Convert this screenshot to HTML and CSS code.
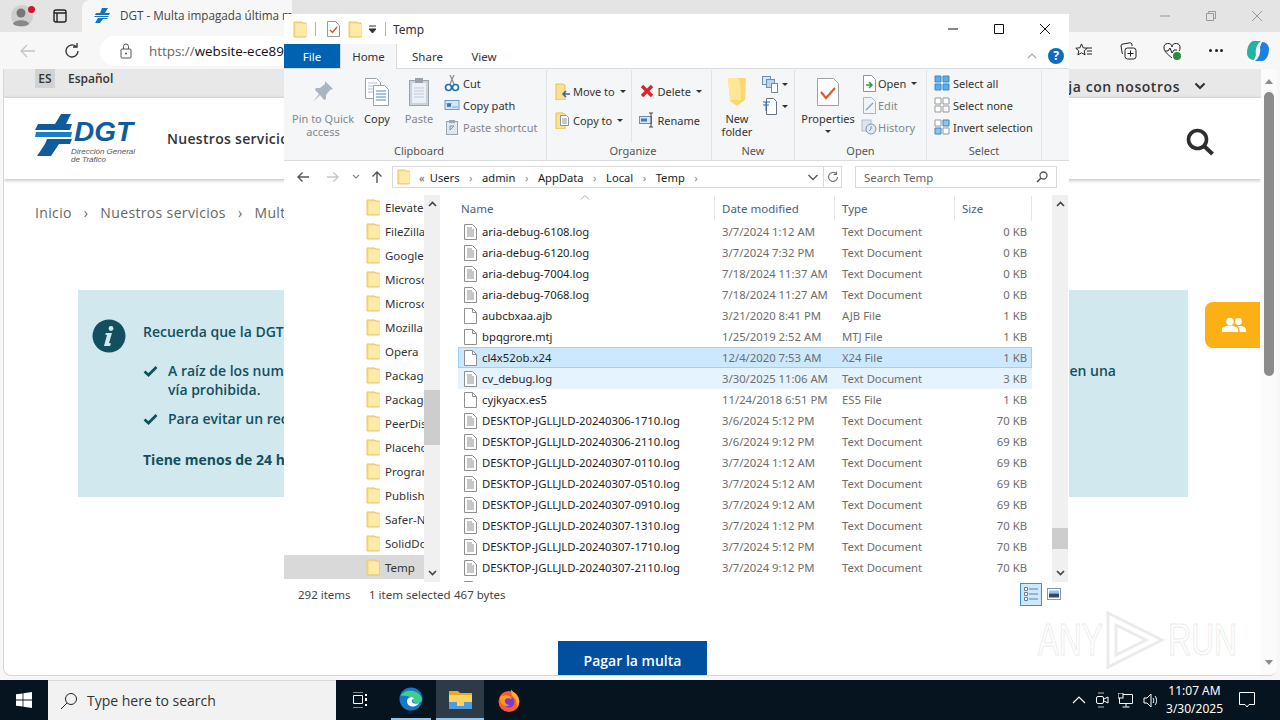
FILE: index.html
```html
<!DOCTYPE html>
<html lang="es">
<head>
    <meta charset="UTF-8">
    <title>DGT - Multa impagada</title>
    <link rel="stylesheet" href="styles.css">
</head>
<body>
    <svg class="defs" width="0" height="0">
        <symbol id="folder" viewBox="0 0 14 17">
            <path d="M1 1h8l1 1h3v14H1z" fill="#fde18e" stroke="#e8c46a" stroke-width="1"/>
            <path d="M3 3h10v12H3z" fill="#ffeaa8"/>
        </symbol>
        <symbol id="textdoc" viewBox="0 0 13 16">
            <path d="M.5.5h8l4 4v11H.5z" fill="#fff" stroke="#8f8f8f"/>
            <path d="M3 4h5M3 6h7M3 8h7M3 10h7M3 12h7" stroke="#8f8f8f"/>
        </symbol>
        <symbol id="blankdoc" viewBox="0 0 13 16">
            <path d="M.5.5h8l4 4v11H.5z" fill="#fff" stroke="#8f8f8f"/>
            <path d="M8.5.5v4h4" fill="none" stroke="#8f8f8f"/>
        </symbol>
        <symbol id="grid" viewBox="0 0 16 16">
            <path d="M1 1h6v6H1zM9 1h6v6H9zM1 9h6v6H1zM9 9h6v6H9z"/>
        </symbol>
    </svg>

    <div class="browser">
        <div class="tabbar">
            <div class="profile">
                <svg width="24" height="24" viewBox="0 0 24 24"><circle cx="12" cy="12" r="11" fill="#cfcfcf"/><circle cx="11" cy="9" r="4.5" fill="#777"/><path d="M3 20c1-5 15-5 16 0-3 3-13 3-16 0z" fill="#888"/></svg>
                <span class="profile-dot"></span>
            </div>
            <svg class="tab-actions" width="16" height="16" viewBox="0 0 16 16"><rect x="2" y="2" width="12" height="12" rx="2" fill="none" stroke="#222" stroke-width="1.4"/><path d="M2 5h12M5 5v9" stroke="#222" stroke-width="1.4"/></svg>
            <div class="tab">
                <svg width="16" height="16" viewBox="0 0 16 16"><path d="M8 1h6l-3 5h5l-1 2H1l1-2h4zM1 9h14l-1 1H0zM4 11h10l-1 1H9l-3 4H1z" fill="#1473bb"/></svg>
                <span class="tab-title">DGT - Multa impagada última multa de tráfico</span>
            </div>
            <div class="winbtns">
                <svg width="12" height="12" viewBox="0 0 12 12"><path d="M1 6h10" stroke="#999"/></svg>
                <svg width="12" height="12" viewBox="0 0 12 12"><path d="M1.5 3.5h7v7h-7zM3.5 3V1.5h7v7H9" fill="none" stroke="#999"/></svg>
                <svg width="12" height="12" viewBox="0 0 12 12"><path d="M1 1l10 10M11 1L1 11" stroke="#999"/></svg>
            </div>
        </div>
        <div class="toolbar">
            <svg width="18" height="18" viewBox="0 0 18 18"><path d="M16 9H2M8 3L2 9l6 6" fill="none" stroke="#c4c4c4" stroke-width="1.3"/></svg>
            <svg class="tool-reload" width="18" height="18" viewBox="0 0 18 18"><path d="M15 9a6 6 0 1 1-2-4.500M14 1v4h-4" fill="none" stroke="#333" stroke-width="1.3"/></svg>
            <div class="addressbox">
                <svg width="14" height="16" viewBox="0 0 14 16"><rect x="2" y="6" width="10" height="9" rx="1" fill="none" stroke="#555"/><path d="M4.5 6V3.5a2.5 2.5 0 0 1 5 0V6" fill="none" stroke="#555"/><circle cx="7" cy="10.5" r="1" fill="#555"/></svg>
                <span class="url"><span class="url-scheme">https://</span>website-ece89a12</span>
            </div>
            <div class="tool-icons">
                <svg width="18" height="18" viewBox="0 0 18 18"><path d="M6.5 2l1.700 3.800 4 .4-3 2.700.9 4-3.600-2.100-3.600 2.100.9-4-3-2.700 4-.4zM12 6h5M12 9h5M12 12h5" fill="none" stroke="#222"/></svg>
                <svg width="18" height="18" viewBox="0 0 18 18"><rect x="6" y="6" width="11" height="11" rx="2.5" fill="none" stroke="#222"/><path d="M11.5 8.500v6M8.500 11.500h6M4 12a2 2 0 0 1-1-2L2 4a2 2 0 0 1 2-2l6-1a2 2 0 0 1 3 2v1" fill="none" stroke="#222"/></svg>
                <svg width="18" height="18" viewBox="0 0 18 18"><path d="M9 16C4 12 1 9 1 6a4 4 0 0 1 8-1 4 4 0 0 1 8 1c0 1-.2 2-1 3" fill="none" stroke="#222"/><path d="M2 9h3l2-3 2 5 2-3h3" fill="none" stroke="#222"/><circle cx="14" cy="14" r="4" fill="#2d8a3e"/></svg>
                <span class="dots">
                    <span class="dot"></span><span class="dot"></span><span class="dot"></span>
                </span>
                <svg width="24" height="24" viewBox="0 0 24 24"><path d="M8 2h7c-4 3-6 8-5 14l-2 5c-4 0-7-3-7-7 0-6 3-12 7-12z" fill="#23b3a3"/><path d="M16 22H9c4-3 6-8 5-14l2-5c4 0 7 3 7 7 0 6-3 12-7 12z" fill="#1f7fe0"/></svg>
            </div>
        </div>

        <div class="page">
            <div class="page-main">
                <div class="langbar">
                    <div class="lang">
                        <span class="lang-code">ES</span>
                        <span class="lang-name">Español</span>
                    </div>
                    <div class="work">
                        <span>Trabaja con nosotros</span>
                        <svg width="12" height="8" viewBox="0 0 12 8"><path d="M1.5 1.5L6 6l4.5-4.5" fill="none" stroke="#333" stroke-width="2.2"/></svg>
                    </div>
                </div>
                <div class="site-header">
                    <div class="logo">
                        <svg width="38" height="44" viewBox="35 110 38 44"><path d="M61 111h10l-5 10h6l-2 6H35l3-6h17z" fill="#0f5c9c"/><path d="M36 129h36l-1 5H35z" fill="#1a7fc4"/><path d="M47 136h25l-2 5H59l-8 12H37l8-12z" fill="#0f5c9c"/></svg>
                        <div class="logo-text">
                            <div class="logo-name">DGT</div>
                            <div class="logo-sub">Dirección General<br>de Tráfico</div>
                        </div>
                    </div>
                    <span class="main-nav">Nuestros servicios</span>
                    <svg class="header-search" width="30" height="30" viewBox="0 0 30 30"><circle cx="12.5" cy="12.5" r="9" fill="none" stroke="#2d2d2d" stroke-width="3.6"/><path d="M19 19l8.5 8" stroke="#2d2d2d" stroke-width="4"/></svg>
                </div>
                <div class="crumbs">
                    <span>Inicio</span><span class="crumb-sep">›</span>
                    <span>Nuestros servicios</span><span class="crumb-sep">›</span>
                    <span>Multas impagadas</span>
                </div>
                <div class="notice">
                    <svg class="notice-icon" width="34" height="34" viewBox="0 0 34 34"><circle cx="17" cy="17" r="16.5" fill="#12505f"/><circle cx="19" cy="9.5" r="2.4" fill="#d1e9ee"/><path d="M14 14h6l-3 10 2 .5-1 2.5h-6l3-11-2-.5z" fill="#d1e9ee"/></svg>
                    <div class="notice-body">
                        <p class="notice-lead">Recuerda que la DGT nunca le solicitará sus datos por teléfono</p>
                        <div class="notice-item">
                            <svg width="15" height="12" viewBox="0 0 15 12"><path d="M1.5 6.5l4 3.5L13.5 2" fill="none" stroke="#12505f" stroke-width="2.8"/></svg>
                            <div>
                                <div class="notice-line"><span>A raíz de los numerosos avisos</span><span>en una</span></div>
                                <div>vía prohibida.</div>
                            </div>
                        </div>
                        <div class="notice-item">
                            <svg width="15" height="12" viewBox="0 0 15 12"><path d="M1.5 6.5l4 3.5L13.5 2" fill="none" stroke="#12505f" stroke-width="2.8"/></svg>
                            <div>Para evitar un recargo</div>
                        </div>
                        <p class="notice-strong">Tiene menos de 24 horas</p>
                    </div>
                </div>
                <button class="pay">Pagar la multa</button>
            </div>
            <div class="page-scroll">
                <span class="arrow-up"></span>
                <div class="page-thumb"></div>
                <span class="arrow-down"></span>
            </div>
        </div>
    </div>

    <div class="contact">
        <svg width="24" height="16" viewBox="0 0 24 16"><circle cx="8" cy="4.500" r="3.800" fill="#fff"/><circle cx="16.500" cy="4.500" r="3.400" fill="#fff"/><path d="M0 15v-2c0-3 4-4.500 8-4.500s8 1.500 8 4.500v2zM17.500 15v-2c0-1.500-.7-2.900-2-3.800 4-.7 8.500.6 8.500 3.800v2z" fill="#fff"/></svg>
    </div>

    <div class="watermark">
        <span>ANY</span>
        <svg width="66" height="62" viewBox="0 0 66 62"><path d="M6 4l54 27L6 58zM14 16l30 15-30 15z" fill="none" stroke="#ebebeb" stroke-width="3"/></svg>
        <span>RUN</span>
    </div>

    <div class="explorer">
        <div class="titlebar">
            <svg width="14" height="17"><use href="#folder"/></svg>
            <span class="qa-sep"></span>
            <svg class="qa-doc" width="13" height="16" viewBox="0 0 13 16"><path d="M.5.5h8l4 4v11H.5z" fill="#fff" stroke="#999"/><path d="M3 9l2.500 2.500L10 6" fill="none" stroke="#d9542b" stroke-width="1.500"/></svg>
            <svg class="qa-folder" width="14" height="17"><use href="#folder"/></svg>
            <svg class="qa-drop" width="9" height="9" viewBox="0 0 9 9"><path d="M1 1h7M1 4h7L4.500 8z" stroke="#333" fill="#333"/></svg>
            <span class="qa-sep"></span>
            <span class="win-title">Temp</span>
            <div class="controls">
                <svg width="12" height="12" viewBox="0 0 12 12"><path d="M1 6h10" stroke="#111"/></svg>
                <svg width="12" height="12" viewBox="0 0 12 12"><path d="M1.500 1.500h9v9h-9z" fill="none" stroke="#111"/></svg>
                <svg width="12" height="12" viewBox="0 0 12 12"><path d="M1 1l10 10M11 1L1 11" stroke="#111"/></svg>
            </div>
        </div>
        <div class="ribbon-tabs">
            <span class="rtab rtab-file">File</span>
            <span class="rtab rtab-home">Home</span>
            <span class="rtab rtab-share">Share</span>
            <span class="rtab rtab-view">View</span>
            <svg class="collapse" width="10" height="6" viewBox="0 0 10 6"><path d="M1 5l4-4 4 4" fill="none" stroke="#aaa" stroke-width="1.200"/></svg>
            <span class="help">?</span>
        </div>
        <div class="ribbon">
            <div class="group group-clipboard">
                <div class="group-body">
                    <div class="big big-pin off">
                        <svg width="24" height="26" viewBox="0 0 24 26"><path d="M14 2l8 8-3 1-4 5v4l-2 1-4-5-7 7 6-8-4-4 1-2h4l5-4z" fill="#a9b5c3"/></svg>
                        <span>Pin to Quick<br>access</span>
                    </div>
                    <div class="big big-copy">
                        <svg width="26" height="30" viewBox="0 0 26 30"><path d="M1.500 1.500h11l4 4v16h-15z" fill="#fff" stroke="#98a3ad"/><path d="M4 6h9M4 9h10M4 12h10M4 15h10" stroke="#a7c3e0"/><path d="M9.500 8.500h11l4 4v16h-15z" fill="#fff" stroke="#98a3ad"/><path d="M12 14h10M12 17h10M12 20h10M12 23h10" stroke="#4a86c8"/></svg>
                        <span>Copy</span>
                    </div>
                    <div class="big big-paste off">
                        <svg width="22" height="30" viewBox="0 0 22 30"><rect x="1.500" y="3.500" width="19" height="25" fill="#c8d3dd" stroke="#98a3ad"/><rect x="4" y="6" width="14" height="20" fill="#edf1f6"/><rect x="7" y="1" width="8" height="5" fill="#98a3ad"/><path d="M6 11h10M6 14h10M6 17h10M6 20h10" stroke="#b9cbe0"/></svg>
                        <span>Paste</span>
                    </div>
                    <div class="small-col small-col-clip">
                        <div class="small">
                            <svg width="14" height="18" viewBox="0 0 14 18"><path d="M9 1L5 10M5 1l4 9" stroke="#8b9299" stroke-width="1.300"/><circle cx="3.500" cy="13.500" r="3" fill="none" stroke="#1f6fb8" stroke-width="1.600"/><circle cx="10.500" cy="13.500" r="3" fill="none" stroke="#1f6fb8" stroke-width="1.600"/></svg>
                            <span>Cut</span>
                        </div>
                        <div class="small">
                            <svg width="15" height="10" viewBox="0 0 15 10"><rect x=".5" y=".5" width="14" height="9" fill="#d6e6f6" stroke="#6f9ccc"/><path d="M2.500 3l1 4 1-4 1 4 1-4M8 7h1M10 7h1M12 7h1" fill="none" stroke="#2e6cab"/></svg>
                            <span>Copy path</span>
                        </div>
                        <div class="small off">
                            <svg width="14" height="16" viewBox="0 0 14 16"><rect x="1.500" y="2.500" width="11" height="13" fill="#dfe6ee" stroke="#9aa6b2"/><rect x="4" y="1" width="6" height="3" fill="#9aa6b2"/><path d="M5 11V7h4M9 7l-4 4" fill="none" stroke="#7f93a8"/></svg>
                            <span>Paste shortcut</span>
                        </div>
                    </div>
                </div>
                <div class="group-label">Clipboard</div>
            </div>
            <div class="group group-organize">
                <div class="group-body">
                    <div class="org-col">
                        <div class="small org-row">
                            <svg width="16" height="17" viewBox="0 0 16 17"><path d="M1 1h7l1 1h1v15H1z" fill="#fde18e" stroke="#e3bd5c"/><path d="M15 11H8M11 8l-3 3 3 3" fill="none" stroke="#2c6cb0" stroke-width="1.600"/></svg>
                            <span>Move to</span><i class="caret"></i>
                        </div>
                        <div class="small org-row">
                            <svg width="16" height="17" viewBox="0 0 16 17"><path d="M1 1h7l1 1h1v15H1z" fill="#fde18e" stroke="#e3bd5c"/><path d="M5.500 3.500h6l2 2v8h-8z" fill="#fff" stroke="#8794a3"/><path d="M7 7h5M7 9h5M7 11h5" stroke="#8794a3"/></svg>
                            <span>Copy to</span><i class="caret"></i>
                        </div>
                    </div>
                    <div class="org-col org-col-right">
                        <div class="small org-row">
                            <svg width="14" height="14" viewBox="0 0 14 14"><path d="M2 2l10 10M12 2L2 12" stroke="#e0202a" stroke-width="3.200"/></svg>
                            <span>Delete</span><i class="caret"></i>
                        </div>
                        <div class="small org-row">
                            <svg width="16" height="16" viewBox="0 0 16 16"><rect x=".5" y="4.500" width="12" height="7" fill="#d6e6f6" stroke="#6f8fb0"/><rect x="2" y="6.500" width="6" height="3" fill="#3d7cc0"/><path d="M12 1v14M10 1h4M10 15h4" stroke="#444"/></svg>
                            <span>Rename</span>
                        </div>
                    </div>
                </div>
                <div class="group-label">Organize</div>
            </div>
            <div class="group group-new">
                <div class="group-body">
                    <div class="big big-newfolder">
                        <svg width="22" height="30" viewBox="0 0 22 30"><path d="M2 1h18l-1 22-8 6-7-5z" fill="#fbd76f"/><path d="M2 1h10l2 4 1 18H4z" fill="#ffe796"/></svg>
                        <span>New<br>folder</span>
                    </div>
                    <div class="new-col">
                        <div class="new-item">
                            <svg width="19" height="17" viewBox="0 0 19 17"><rect x=".5" y=".5" width="8" height="8" fill="#dbe7f3" stroke="#6f8fb0"/><rect x="4.500" y="3.500" width="8" height="8" fill="#bcd3ea" stroke="#6f8fb0"/><rect x="9.500" y="7.500" width="6" height="9" fill="#fff" stroke="#7a8794"/></svg>
                            <i class="caret"></i>
                        </div>
                        <div class="new-item">
                            <svg width="19" height="17" viewBox="0 0 19 17"><path d="M4.500.5h7l3 3v13h-10z" fill="#fff" stroke="#66727e"/><path d="M1 4h7M4 4v9M1 7h6" stroke="#1f6fb8"/></svg>
                            <i class="caret"></i>
                        </div>
                    </div>
                </div>
                <div class="group-label">New</div>
            </div>
            <div class="group group-open">
                <div class="group-body">
                    <div class="big big-props">
                        <svg width="24" height="30" viewBox="0 0 24 30"><path d="M1.500 1.500h16l5 5v22h-21z" fill="#fff" stroke="#a0a0a0"/><path d="M5 15l5 6 9-10" fill="none" stroke="#db5a2e" stroke-width="2.200"/></svg>
                        <span>Properties</span>
                        <i class="caret"></i>
                    </div>
                    <div class="small-col small-col-open">
                        <div class="small">
                            <svg width="14" height="17" viewBox="0 0 14 17"><path d="M1.500.5h8l4 4v12h-12z" fill="#fff" stroke="#8794a3"/><path d="M4 10h5M7 7l3 3-3 3" fill="none" stroke="#2e9c3a" stroke-width="1.500"/></svg>
                            <span>Open</span><i class="caret"></i>
                        </div>
                        <div class="small off">
                            <svg width="14" height="17" viewBox="0 0 14 17"><path d="M1.500.5h8l4 4v12h-12z" fill="#f0f3f7" stroke="#aab5c1"/><path d="M4 13l7-7" stroke="#8aa1b8" stroke-width="1.500"/></svg>
                            <span>Edit</span>
                        </div>
                        <div class="small off">
                            <svg width="16" height="16" viewBox="0 0 16 16"><rect x="1" y="1" width="9" height="11" fill="#dfe5ec" stroke="#b4bdc7"/><circle cx="10" cy="10" r="5" fill="#dfe9f3" stroke="#7f93a8"/><path d="M10 7v3l-2 2" fill="none" stroke="#7f93a8"/></svg>
                            <span>History</span>
                        </div>
                    </div>
                </div>
                <div class="group-label">Open</div>
            </div>
            <div class="group group-select">
                <div class="group-body">
                    <div class="small-col small-col-select">
                        <div class="small">
                            <svg class="sel-all" width="16" height="16"><use href="#grid"/></svg>
                            <span>Select all</span>
                        </div>
                        <div class="small">
                            <svg class="sel-none" width="16" height="16"><use href="#grid"/></svg>
                            <span>Select none</span>
                        </div>
                        <div class="small">
                            <svg width="16" height="16" viewBox="0 0 16 16"><path d="M1 1h6v6H1zM9 9h6v6H9z" fill="#fff" stroke="#999"/><path d="M9 1h6v6H9zM1 9h6v6H1z" fill="#8cc4ee" stroke="#3f88c5"/></svg>
                            <span>Invert selection</span>
                        </div>
                    </div>
                </div>
                <div class="group-label">Select</div>
            </div>
        </div>
        <div class="addressrow">
            <svg width="14" height="12" viewBox="0 0 14 12"><path d="M13 6H2M6.500 1.500L2 6l4.500 4.500" fill="none" stroke="#555" stroke-width="1.400"/></svg>
            <svg class="nav-forward" width="14" height="12" viewBox="0 0 14 12"><path d="M1 6h11M7.500 1.500L12 6l-4.500 4.500" fill="none" stroke="#c6c6c6" stroke-width="1.400"/></svg>
            <svg class="nav-recent" width="8" height="6" viewBox="0 0 8 6"><path d="M1 1l3 3 3-3" fill="none" stroke="#888" stroke-width="1.200"/></svg>
            <svg class="nav-up" width="12" height="14" viewBox="0 0 12 14"><path d="M6 13V2M1.500 6.500L6 2l4.500 4.500" fill="none" stroke="#555" stroke-width="1.400"/></svg>
            <div class="pathbox">
                <svg class="path-folder" width="13" height="16"><use href="#folder"/></svg>
                <span class="path-more">«</span>
                <span>Users</span><i class="path-sep">›</i>
                <span>admin</span><i class="path-sep">›</i>
                <span>AppData</span><i class="path-sep">›</i>
                <span>Local</span><i class="path-sep">›</i>
                <span>Temp</span><i class="path-sep">›</i>
                <svg class="path-down" width="12" height="7" viewBox="0 0 12 7"><path d="M1.500 1l4.500 4.500L10.500 1" fill="none" stroke="#555" stroke-width="1.300"/></svg>
                <span class="path-refresh">
                    <svg width="12" height="12" viewBox="0 0 12 12"><path d="M10.500 6A4.500 4.500 0 1 1 9 2.600M9.500 .5v3h-3" fill="none" stroke="#777" stroke-width="1.200"/></svg>
                </span>
            </div>
            <div class="searchbox">
                <span>Search Temp</span>
                <svg width="12" height="12" viewBox="0 0 12 12"><circle cx="7.500" cy="4.500" r="3.500" fill="none" stroke="#555" stroke-width="1.300"/><path d="M5 7l-4 4" stroke="#555" stroke-width="1.600"/></svg>
            </div>
        </div>
        <div class="panes">
            <div class="nav">
                <div class="nav-list">
                    <div class="nav-item"><svg width="14" height="17"><use href="#folder"/></svg><span>Elevated Diagnostics</span></div>
                    <div class="nav-item"><svg width="14" height="17"><use href="#folder"/></svg><span>FileZilla</span></div>
                    <div class="nav-item"><svg width="14" height="17"><use href="#folder"/></svg><span>Google</span></div>
                    <div class="nav-item"><svg width="14" height="17"><use href="#folder"/></svg><span>Microsoft</span></div>
                    <div class="nav-item"><svg width="14" height="17"><use href="#folder"/></svg><span>Microsoft Edge</span></div>
                    <div class="nav-item"><svg width="14" height="17"><use href="#folder"/></svg><span>Mozilla</span></div>
                    <div class="nav-item"><svg width="14" height="17"><use href="#folder"/></svg><span>Opera</span></div>
                    <div class="nav-item"><svg width="14" height="17"><use href="#folder"/></svg><span>Package Cache</span></div>
                    <div class="nav-item"><svg width="14" height="17"><use href="#folder"/></svg><span>Packages</span></div>
                    <div class="nav-item"><svg width="14" height="17"><use href="#folder"/></svg><span>PeerDistRepub</span></div>
                    <div class="nav-item"><svg width="14" height="17"><use href="#folder"/></svg><span>PlaceholderTileLogo</span></div>
                    <div class="nav-item"><svg width="14" height="17"><use href="#folder"/></svg><span>Programs</span></div>
                    <div class="nav-item"><svg width="14" height="17"><use href="#folder"/></svg><span>Publishers</span></div>
                    <div class="nav-item"><svg width="14" height="17"><use href="#folder"/></svg><span>Safer-Networking</span></div>
                    <div class="nav-item"><svg width="14" height="17"><use href="#folder"/></svg><span>SolidDocuments</span></div>
                    <div class="nav-item nav-item-active"><svg width="14" height="17"><use href="#folder"/></svg><span>Temp</span></div>
                </div>
                <div class="scroll scroll-nav">
                    <svg width="9" height="6" viewBox="0 0 9 6"><path d="M1 5l3.500-3.500L8 5" fill="none" stroke="#444" stroke-width="1.600"/></svg>
                    <div class="scroll-track"><div class="thumb thumb-nav"></div></div>
                    <svg width="9" height="6" viewBox="0 0 9 6"><path d="M1 1l3.500 3.500L8 1" fill="none" stroke="#444" stroke-width="1.600"/></svg>
                </div>
            </div>
            <div class="files">
                <div class="file-list">
                    <svg class="sort" width="10" height="5" viewBox="0 0 10 5"><path d="M1 4.500l4-4 4 4" fill="none" stroke="#aaa"/></svg>
                    <div class="file-head">
                        <span>Name</span><span>Date modified</span><span>Type</span><span>Size</span>
                    </div>
                    <div class="file-row"><span class="fname"><svg width="13" height="16"><use href="#textdoc"/></svg>aria-debug-6108.log</span><span>3/7/2024 1:12 AM</span><span>Text Document</span><span class="fsize">0 KB</span></div>
                    <div class="file-row"><span class="fname"><svg width="13" height="16"><use href="#textdoc"/></svg>aria-debug-6120.log</span><span>3/7/2024 7:32 PM</span><span>Text Document</span><span class="fsize">0 KB</span></div>
                    <div class="file-row"><span class="fname"><svg width="13" height="16"><use href="#textdoc"/></svg>aria-debug-7004.log</span><span>7/18/2024 11:37 AM</span><span>Text Document</span><span class="fsize">0 KB</span></div>
                    <div class="file-row"><span class="fname"><svg width="13" height="16"><use href="#textdoc"/></svg>aria-debug-7068.log</span><span>7/18/2024 11:27 AM</span><span>Text Document</span><span class="fsize">0 KB</span></div>
                    <div class="file-row"><span class="fname"><svg width="13" height="16"><use href="#blankdoc"/></svg>aubcbxaa.ajb</span><span>3/21/2020 8:41 PM</span><span>AJB File</span><span class="fsize">1 KB</span></div>
                    <div class="file-row"><span class="fname"><svg width="13" height="16"><use href="#blankdoc"/></svg>bpqgrore.mtj</span><span>1/25/2019 2:52 AM</span><span>MTJ File</span><span class="fsize">1 KB</span></div>
                    <div class="file-row file-row-selected"><span class="fname"><svg width="13" height="16"><use href="#blankdoc"/></svg>cl4x52ob.x24</span><span>12/4/2020 7:53 AM</span><span>X24 File</span><span class="fsize">1 KB</span></div>
                    <div class="file-row file-row-hover"><span class="fname"><svg width="13" height="16"><use href="#textdoc"/></svg>cv_debug.log</span><span>3/30/2025 11:06 AM</span><span>Text Document</span><span class="fsize">3 KB</span></div>
                    <div class="file-row"><span class="fname"><svg width="13" height="16"><use href="#blankdoc"/></svg>cyjkyacx.es5</span><span>11/24/2018 6:51 PM</span><span>ES5 File</span><span class="fsize">1 KB</span></div>
                    <div class="file-row"><span class="fname"><svg width="13" height="16"><use href="#textdoc"/></svg>DESKTOP-JGLLJLD-20240306-1710.log</span><span>3/6/2024 5:12 PM</span><span>Text Document</span><span class="fsize">70 KB</span></div>
                    <div class="file-row"><span class="fname"><svg width="13" height="16"><use href="#textdoc"/></svg>DESKTOP-JGLLJLD-20240306-2110.log</span><span>3/6/2024 9:12 PM</span><span>Text Document</span><span class="fsize">69 KB</span></div>
                    <div class="file-row"><span class="fname"><svg width="13" height="16"><use href="#textdoc"/></svg>DESKTOP-JGLLJLD-20240307-0110.log</span><span>3/7/2024 1:12 AM</span><span>Text Document</span><span class="fsize">69 KB</span></div>
                    <div class="file-row"><span class="fname"><svg width="13" height="16"><use href="#textdoc"/></svg>DESKTOP-JGLLJLD-20240307-0510.log</span><span>3/7/2024 5:12 AM</span><span>Text Document</span><span class="fsize">69 KB</span></div>
                    <div class="file-row"><span class="fname"><svg width="13" height="16"><use href="#textdoc"/></svg>DESKTOP-JGLLJLD-20240307-0910.log</span><span>3/7/2024 9:12 AM</span><span>Text Document</span><span class="fsize">69 KB</span></div>
                    <div class="file-row"><span class="fname"><svg width="13" height="16"><use href="#textdoc"/></svg>DESKTOP-JGLLJLD-20240307-1310.log</span><span>3/7/2024 1:12 PM</span><span>Text Document</span><span class="fsize">70 KB</span></div>
                    <div class="file-row"><span class="fname"><svg width="13" height="16"><use href="#textdoc"/></svg>DESKTOP-JGLLJLD-20240307-1710.log</span><span>3/7/2024 5:12 PM</span><span>Text Document</span><span class="fsize">70 KB</span></div>
                    <div class="file-row"><span class="fname"><svg width="13" height="16"><use href="#textdoc"/></svg>DESKTOP-JGLLJLD-20240307-2110.log</span><span>3/7/2024 9:12 PM</span><span>Text Document</span><span class="fsize">70 KB</span></div>
                    <div class="file-row"><span class="fname"><svg width="13" height="16"><use href="#textdoc"/></svg></span></div>
                </div>
                <div class="scroll scroll-files">
                    <svg width="9" height="6" viewBox="0 0 9 6"><path d="M1 5l3.500-3.500L8 5" fill="none" stroke="#444" stroke-width="1.600"/></svg>
                    <div class="scroll-track"><div class="thumb thumb-files"></div></div>
                    <svg width="9" height="6" viewBox="0 0 9 6"><path d="M1 1l3.500 3.500L8 1" fill="none" stroke="#444" stroke-width="1.600"/></svg>
                </div>
            </div>
        </div>
        <div class="statusbar">
            <span class="st-count">292 items</span>
            <span class="st-sel">1 item selected</span>
            <span>467 bytes</span>
            <div class="views">
                <span class="view view-on">
                    <svg width="16" height="16" viewBox="0 0 16 16"><path d="M1.500 1.500h3v3h-3zM1.500 6.500h3v3h-3zM1.500 11.500h3v3h-3z" fill="#fff" stroke="#6d7d8c"/><path d="M6 3h9M6 8h9M6 13h9" stroke="#6d7d8c"/></svg>
                </span>
                <span class="view view-thumb">
                    <svg width="14" height="12" viewBox="0 0 14 12"><rect x=".5" y=".5" width="13" height="11" fill="#fff" stroke="#8a96a3"/><rect x="2" y="2.500" width="10" height="3" fill="#9cc3e6"/><rect x="2" y="5.500" width="10" height="4" fill="#2e4a66"/></svg>
                </span>
            </div>
        </div>
    </div>

    <div class="taskbar">
        <div class="start">
            <svg width="16" height="16" viewBox="0 0 16 16"><path d="M0 2.300l6.600-.9v6.200H0zM7.400 1.300L16 0v7.600H7.400zM0 8.400h6.600v6.200L0 13.700zM7.400 8.400H16V16l-8.600-1.300z" fill="#fff"/></svg>
        </div>
        <div class="task-search">
            <svg width="18" height="18" viewBox="0 0 18 18"><circle cx="11" cy="7" r="5.500" fill="none" stroke="#222"/><path d="M7 11l-6 6" stroke="#222"/></svg>
            <span>Type here to search</span>
        </div>
        <div class="task-view">
            <svg width="16" height="16" viewBox="0 0 16 16"><path d="M1 0h10M1 16h10M1.500 3.500h9v8h-9z" fill="none" stroke="#fff"/><path d="M14 2v2M14 6v3M14 12v2" stroke="#fff" stroke-width="2"/></svg>
        </div>
        <div class="task-app task-app-open">
            <svg width="24" height="24" viewBox="0 0 24 24"><circle cx="12" cy="12" r="11.500" fill="#1478c8"/><path d="M2 9C4 2 20 1 23 12c0 3-3 5-7 4-2-1-3-3-2-4-3-3-9-4-12-3z" fill="#3ecf8e"/><path d="M8 14c0-4 6-5 7-2-2 0-3 2-1 4 2 1 4 1 6 0-2 5-12 5-12-2z" fill="#fff"/></svg>
        </div>
        <div class="task-app task-app-active">
            <svg width="23" height="20" viewBox="0 0 23 20"><path d="M0 2h9l2 2h12v16H0z" fill="#e9a825"/><path d="M0 6h23v14H0z" fill="#fcd462"/><rect x="0" y="13" width="23" height="7" fill="#4f9bdc"/><rect x="8" y="12" width="7" height="5" fill="#fcd462"/></svg>
        </div>
        <div class="task-app task-app-fox">
            <svg width="24" height="24" viewBox="0 0 24 24"><circle cx="12" cy="13.500" r="10.500" fill="#ff5b2e"/><path d="M14 1c1 3 4 3 7 8 2 4 1 8-1 10-1-3 0-6-2-8-1-2-4-3-4-10z" fill="#ffb01f"/><circle cx="12" cy="14" r="5.500" fill="#7a3bd1"/><path d="M3 9c2-2 4-1 6-2 3 0 5 2 6 4-3-1-6-1-7 1-1 3 2 5 5 5-3 2-7 1-9-2-1-2-1-4-1-6z" fill="#ff9a26"/></svg>
        </div>
        <div class="tray">
            <svg width="14" height="8" viewBox="0 0 14 8"><path d="M1 7l6-6 6 6" fill="none" stroke="#fff" stroke-width="1.200"/></svg>
            <svg width="14" height="16" viewBox="0 0 14 16"><path d="M3 1h6M3 15h6" stroke="#fff" opacity=".7"/><rect x="1.500" y="4.500" width="7" height="7" rx="1.500" fill="none" stroke="#fff"/><path d="M9 7l4-2v6l-4-2" fill="none" stroke="#fff"/></svg>
            <svg width="16" height="15" viewBox="0 0 16 15"><path d="M1.500 1.500h13v9h-13zM8 10.500v3M4.500 14h7" fill="none" stroke="#fff"/><rect x="0" y="0" width="5" height="5" fill="#05141f" stroke="#fff"/></svg>
            <svg width="16" height="15" viewBox="0 0 16 15"><path d="M1 5h3l4-4v13l-4-4H1zM10 5c1 1 1 4 0 5M12 3c2 2 2 7 0 9" fill="none" stroke="#fff"/></svg>
            <div class="clock">
                <div>11:07 AM</div>
                <div>3/30/2025</div>
            </div>
            <svg class="notif" width="16" height="16" viewBox="0 0 16 16"><path d="M.5.500h15v12H10l-2 2.500-2-2.500H.5z" fill="none" stroke="#fff"/></svg>
        </div>
    </div>
</body>
</html>
```

FILE: styles.css
```css
* {
    margin: 0;
    padding: 0;
    box-sizing: border-box;
}
html, body {
    width: 1280px;
    height: 720px;
    overflow: hidden;
}
body {
    position: relative;
    display: flex;
    flex-direction: column;
    font-family: "Open Sans", "Noto Sans", sans-serif;
    background: #f7f7f7;
}
svg {
    display: block;
    flex-shrink: 0;
}
.defs {
    position: absolute;
}

/* browser */
.browser {
    height: 680px;
    display: flex;
    flex-direction: column;
}
.tabbar {
    height: 32px;
    display: flex;
    align-items: center;
    background: #e4e4e4;
    padding-left: 10px;
}
.profile {
    position: relative;
    width: 24px;
    height: 24px;
}
.profile-dot {
    position: absolute;
    top: 2px;
    left: 18px;
    width: 7px;
    height: 7px;
    border-radius: 50%;
    background: #d5132a;
}
.tab-actions {
    margin-left: 18px;
}
.tab {
    width: 210px;
    height: 32px;
    margin-left: 14px;
    padding: 0 0 2px 12px;
    display: flex;
    align-items: center;
    gap: 10px;
    overflow: hidden;
    background: #f7f7f7;
    border-radius: 8px 0 0 0;
    white-space: nowrap;
}
.tab-title {
    font-size: 11.7px;
    color: #444;
}
.winbtns {
    margin-left: auto;
    display: flex;
    gap: 34px;
    padding-right: 17px;
}
.toolbar {
    height: 37px;
    display: flex;
    align-items: center;
    padding: 0 10px 0 19px;
    background: #f7f7f7;
}
.tool-reload {
    margin-left: 26px;
}
.addressbox {
    margin-left: 19px;
    width: 220px;
    height: 30px;
    padding-left: 19px;
    display: flex;
    align-items: center;
    gap: 16px;
    background: #fff;
    border-radius: 15px 0 0 15px;
    overflow: hidden;
    white-space: nowrap;
}
.url {
    font-size: 13.4px;
    color: #111;
}
.url-scheme {
    color: #666;
}
.tool-icons {
    margin-left: auto;
    display: flex;
    align-items: center;
    gap: 26px;
}
.dots {
    width: 18px;
    margin-right: -5px;
    display: flex;
    justify-content: space-between;
    padding: 0 2px;
}
.dot {
    width: 3px;
    height: 3px;
    border-radius: 50%;
    background: #222;
}

/* page behind the window */
.page {
    height: 607px;
    margin-left: 3px;
    margin-right: 3px;
    display: flex;
    background: #fff;
    border-left: 1px solid #d6d6d6;
    border-bottom: 1px solid #d6d6d6;
    border-radius: 0 0 8px 8px;
    overflow: hidden;
}
.page-main {
    width: 1257px;
    display: flex;
    flex-direction: column;
}
.langbar {
    height: 29px;
    display: flex;
    justify-content: space-between;
    background: #e8e8e8;
    padding: 0 55px 0 31px;
    flex-shrink: 0;
}
.lang {
    display: flex;
    gap: 13px;
    height: 19px;
    align-items: center;
    font-size: 12px;
    font-weight: 600;
    color: #333;
}
.lang-code {
    width: 20px;
    height: 19px;
    line-height: 19px;
    text-align: center;
    background: #d2d2d2;
}
.work {
    display: flex;
    align-items: center;
    gap: 14px;
    padding-top: 5px;
    font-size: 14px;
    font-weight: 600;
    letter-spacing: .55px;
    color: #333;
    white-space: nowrap;
}
.site-header {
    height: 81px;
    display: flex;
    align-items: center;
    padding: 0 46px 0 31px;
    background: #fff;
    box-shadow: 0 1px 4px rgba(0, 0, 0, .3);
    flex-shrink: 0;
}
.logo {
    display: flex;
    align-items: flex-start;
    gap: 1px;
}
.logo-name {
    margin-top: 4px;
    font-family: "Liberation Sans", sans-serif;
    font-size: 28px;
    line-height: 30px;
    font-weight: 700;
    font-style: italic;
    color: #0f5c9c;
}
.logo-sub {
    margin: 1px 0 0 -3px;
    font-family: "Liberation Sans", sans-serif;
    font-size: 8px;
    line-height: 8px;
    font-style: italic;
    color: #555;
    white-space: nowrap;
}
.main-nav {
    margin-left: 32px;
    font-size: 14px;
    font-weight: 600;
    letter-spacing: .3px;
    color: #333;
}
.header-search {
    margin-left: auto;
    margin-top: 7px;
}
.crumbs {
    height: 111px;
    padding: 24px 0 0 31px;
    display: flex;
    gap: 12px;
    font-size: 14px;
    letter-spacing: .35px;
    color: #666;
    flex-shrink: 0;
}
.notice {
    width: 1110px;
    height: 207px;
    margin-left: 74px;
    padding: 32px 14px 0 14px;
    display: flex;
    gap: 17px;
    background: #d1e9ee;
    color: #12505f;
    font-size: 14px;
    font-weight: 600;
    line-height: 19px;
    flex-shrink: 0;
}
.notice-icon {
    margin-top: -3px;
}
.notice-body {
    flex: 1;
    padding-right: 58px;
}
.notice-lead {
    margin-bottom: 20px;
    font-weight: 600;
}
.notice-item {
    display: flex;
    gap: 10px;
    margin-bottom: 10px;
}
.notice-item svg {
    margin-top: 4px;
}
.notice-item > div {
    flex: 1;
}
.notice-line {
    display: flex;
    justify-content: space-between;
}
.notice-strong {
    margin-top: 22px;
    font-weight: 700;
}
.pay {
    align-self: center;
    width: 149px;
    height: 35px;
    margin-top: auto;
    margin-bottom: -1px;
    padding-top: 4px;
    border: 0;
    background: #00509f;
    color: #fff;
    font-family: inherit;
    font-size: 14px;
    font-weight: 600;
    flex-shrink: 0;
}
.page-scroll {
    flex: 1;
    display: flex;
    flex-direction: column;
    align-items: center;
    padding-top: 10px;
    background: #fbfbfb;
}
.page-thumb {
    width: 10px;
    height: 284px;
    margin-top: 8px;
    background: #8b8b8b;
    border-radius: 5px;
}
.arrow-up, .arrow-down {
    width: 0;
    height: 0;
    border-left: 4px solid transparent;
    border-right: 4px solid transparent;
}
.arrow-up {
    border-bottom: 5px solid #8b8b8b;
}
.arrow-down {
    margin-top: auto;
    margin-bottom: 10px;
    border-top: 5px solid #8b8b8b;
}
.contact {
    position: absolute;
    left: 1205px;
    top: 302px;
    width: 55px;
    height: 46px;
    display: flex;
    align-items: center;
    justify-content: center;
    padding-left: 2px;
    background: #fbb116;
    border-radius: 8px 0 0 8px;
}
.watermark {
    position: absolute;
    left: 1038px;
    top: 608px;
    width: 194px;
    height: 64px;
    display: flex;
    align-items: center;
    justify-content: space-between;
    font-family: "Liberation Sans", sans-serif;
    font-size: 44px;
    color: #fff;
    -webkit-text-stroke: 1px #ebebeb;
}
.watermark span {
    transform: scaleX(.72);
    margin: 0 -13px;
}

/* explorer window */
.explorer {
    position: absolute;
    left: 284px;
    top: 14px;
    width: 785px;
    height: 596px;
    display: flex;
    flex-direction: column;
    background: #fff;
    font-family: "Noto Sans", sans-serif;
    font-size: 11.5px;
    color: #333;
}
.titlebar {
    height: 30px;
    display: flex;
    align-items: center;
    padding-left: 9px;
    flex-shrink: 0;
}
.qa-sep {
    width: 1px;
    height: 14px;
    margin: 0 8px;
    background: #b5b5b5;
}
.qa-doc {
    margin-left: 3px;
}
.qa-folder {
    margin-left: 8px;
}
.qa-drop {
    margin-left: 6px;
}
.win-title {
    margin-left: -1px;
    font-size: 12px;
    color: #333;
}
.controls {
    margin-left: auto;
    display: flex;
    gap: 34px;
    padding-right: 18px;
}
.ribbon-tabs {
    height: 25px;
    display: flex;
    align-items: center;
    border-bottom: 1px solid #dadbdc;
    flex-shrink: 0;
    padding-right: 5px;
}
.rtab {
    height: 24px;
    line-height: 26px;
    text-align: center;
}
.rtab-file {
    width: 56px;
    background: #0063b1;
    color: #fff;
}
.rtab-home {
    width: 57px;
    height: 25px;
    margin-bottom: -1px;
    background: #f5f6f7;
    border: 1px solid #dadbdc;
    border-bottom: 0;
    border-top: 0;
}
.rtab-share {
    width: 61px;
}
.rtab-view {
    width: 52px;
}
.collapse {
    margin-left: auto;
}
.help {
    width: 16px;
    height: 16px;
    margin-left: 11px;
    border-radius: 50%;
    background: #0f6cbd;
    color: #fff;
    font-size: 12px;
    font-weight: 700;
    line-height: 16px;
    text-align: center;
}
.ribbon {
    height: 92px;
    display: flex;
    background: #f5f6f7;
    border-bottom: 1px solid #dadbdc;
    font-size: 11px;
    flex-shrink: 0;
}
.group {
    display: flex;
    flex-direction: column;
    border-right: 1px solid #e2e4e7;
    margin: 1px 0 0;
}
.group-clipboard { width: 263px; padding-left: 8px; }
.group-organize { width: 165px; padding-left: 8px; }
.group-new { width: 83px; }
.group-open { width: 132px; }
.group-select { width: 115px; }
.group-body {
    flex: 1;
    display: flex;
    min-height: 0;
}
.group-label {
    height: 18px;
    line-height: 18px;
    text-align: center;
    color: #555;
}
.big {
    display: flex;
    flex-direction: column;
    align-items: center;
    text-align: center;
    line-height: 13px;
    padding-top: 7px;
    white-space: nowrap;
}
.big svg {
    height: 30px;
    margin-bottom: 5px;
}
.big-pin { width: 62px; }
.big-copy { width: 46px; }
.big-paste { width: 38px; }
.big-newfolder { width: 50px; }
.big-props { width: 66px; }
.off {
    color: #83878c;
}
.small-col {
    display: flex;
    flex-direction: column;
    padding-top: 2px;
}
.small-col-clip { margin-left: 6px; }
.small-col-select { padding-left: 7px; }
.small {
    height: 22px;
    display: flex;
    align-items: center;
    gap: 2px;
    white-space: nowrap;
}
.small svg {
    width: 16px;
}
.small-col-clip .small {
    gap: 3px;
}
.small-col-open .small {
    gap: 1px;
}
.small-col-select .small {
    gap: 3px;
}
.org-col {
    width: 77px;
    display: flex;
    flex-direction: column;
    gap: 7px;
    padding-top: 10px;
}
.org-row .caret {
    margin-left: 3px;
}
.org-col-right {
    padding-left: 7px;
    width: 80px;
    border-left: 1px solid #e2e4e7;
}
.org-row {
    white-space: nowrap;
}
.caret {
    width: 0;
    height: 0;
    border-left: 3px solid transparent;
    border-right: 3px solid transparent;
    border-top: 3px solid #333;
    flex-shrink: 0;
}
.small-col-open .caret {
    margin-left: 4px;
}
.big-props .caret {
    margin-top: 5px;
}
.new-col {
    display: flex;
    flex-direction: column;
    gap: 5px;
    padding: 6px 0 0 0;
}
.new-item {
    display: flex;
    align-items: center;
    gap: 1px;
}
.sel-all {
    fill: #5aaeea;
    stroke: #3f88c5;
}
.sel-none {
    fill: #fff;
    stroke: #9a9a9a;
}
.addressrow {
    height: 34px;
    padding: 0 0 2px 12px;
    display: flex;
    align-items: center;
    flex-shrink: 0;
}
.nav-forward { margin-left: 16px; }
.nav-recent { margin-left: 12px; }
.nav-up { margin-left: 11px; }
.pathbox {
    width: 450px;
    height: 22px;
    margin-left: 9px;
    padding-left: 4px;
    display: flex;
    align-items: center;
    border: 1px solid #d9d9d9;
    color: #222;
    font-size: 11.2px;
}
.path-folder { margin-right: 9px; }
.path-more { margin-right: 5px; color: #666; }
.path-sep {
    margin: 0 9.5px;
    font-style: normal;
    color: #888;
}
.path-down { margin-left: auto; margin-right: 4px; }
.path-refresh {
    width: 18px;
    height: 20px;
    display: flex;
    align-items: center;
    justify-content: center;
    border-left: 1px solid #d9d9d9;
}
.searchbox {
    width: 202px;
    height: 22px;
    margin-left: 13px;
    padding: 0 8px;
    display: flex;
    align-items: center;
    justify-content: space-between;
    border: 1px solid #d9d9d9;
    color: #666;
}
.panes {
    height: 387px;
    display: flex;
    flex-shrink: 0;
}
.nav {
    width: 156px;
    display: flex;
    flex-shrink: 0;
}
.nav-list {
    width: 140px;
    overflow: hidden;
}
.nav-item {
    height: 24px;
    padding-left: 82px;
    display: flex;
    align-items: center;
    gap: 5px;
    white-space: nowrap;
    overflow: hidden;
    color: #333;
}
.nav-item-active {
    background: #d9d9d9;
    padding-right: 0;
}
.scroll {
    width: 16px;
    display: flex;
    flex-direction: column;
    align-items: center;
    padding: 6px 0;
    background: #f0f0f0;
    flex-shrink: 0;
}
.scroll-track {
    flex: 1;
    width: 100%;
    position: relative;
}
.thumb {
    position: absolute;
    left: 0;
    width: 100%;
    background: #cdcdcd;
}
.thumb-nav {
    top: 183px;
    height: 55px;
}
.thumb-files {
    top: 321px;
    height: 21px;
}
.files {
    flex: 1;
    display: flex;
    padding-left: 18px;
}
.file-list {
    position: relative;
    width: 576px;
    margin-right: 18px;
    padding-top: 1px;
    overflow: hidden;
}
.sort {
    position: absolute;
    left: 122px;
    top: 0;
}
.file-head, .file-row {
    display: grid;
    grid-template-columns: 257px 120px 120px 77px;
    width: 574px;
    align-items: center;
}
.file-head {
    height: 25px;
    color: #4c607a;
}
.file-head span {
    height: 25px;
    line-height: 25px;
    padding-left: 7px;
    border-right: 1px solid #e5e5e5;
}
.file-head span:first-child {
    padding-left: 3px;
}
.file-row {
    height: 21px;
    color: #6d6d6d;
    font-size: 11.3px;
    white-space: nowrap;
}
.file-row span {
    padding-left: 7px;
}
.file-row .fname {
    display: flex;
    align-items: center;
    gap: 5px;
    padding-left: 6px;
    color: #1f1f1f;
}
.file-row .fsize {
    padding-right: 5px;
    text-align: right;
}
.file-row-selected {
    background: #cce8ff;
    outline: 1px solid #99d1ff;
    outline-offset: -1px;
}
.file-row-hover {
    background: #e5f3ff;
}
.statusbar {
    height: 28px;
    padding: 0 8px 4px 14px;
    display: flex;
    align-items: center;
    color: #444;
    flex-shrink: 0;
}
.st-count { width: 71px; }
.st-sel { width: 85px; }
.views {
    margin-left: auto;
    display: flex;
    align-items: center;
    gap: 4px;
}
.view {
    width: 22px;
    height: 23px;
    display: flex;
    align-items: center;
    justify-content: center;
}
.view-thumb {
    width: 15px;
}
.view-on {
    background: #cce8ff;
    border: 1px solid #3f8fc9;
}

/* taskbar */
.taskbar {
    height: 40px;
    display: flex;
    align-items: center;
    background: #05141f;
    flex-shrink: 0;
}
.start {
    width: 48px;
    display: flex;
    justify-content: center;
}
.task-search {
    width: 288px;
    height: 40px;
    padding-left: 12px;
    display: flex;
    align-items: center;
    gap: 9px;
    background: #f2f2f2;
    border-top: 1px solid #d8d8d8;
    font-size: 14px;
    color: #333;
}
.task-view {
    width: 48px;
    display: flex;
    justify-content: center;
}
.task-app {
    height: 40px;
    display: flex;
    align-items: center;
    justify-content: center;
}
.task-app-open {
    width: 40px;
    margin-left: 7px;
    border-bottom: 2px solid #8fc5ef;
}
.task-app-active {
    width: 48px;
    margin-left: 5px;
    background: #2c3b46;
    border-bottom: 2px solid #8fc5ef;
}
.task-app-fox {
    width: 50px;
}
.tray {
    margin-left: auto;
    display: flex;
    align-items: center;
    gap: 9px;
    padding: 0 25px 0 0;
    color: #fff;
}
.clock {
    margin-left: -2px;
    font-family: "Noto Sans", sans-serif;
    font-size: 12px;
    line-height: 18px;
    text-align: center;
}
.notif {
    margin-left: 7px;
}
```
